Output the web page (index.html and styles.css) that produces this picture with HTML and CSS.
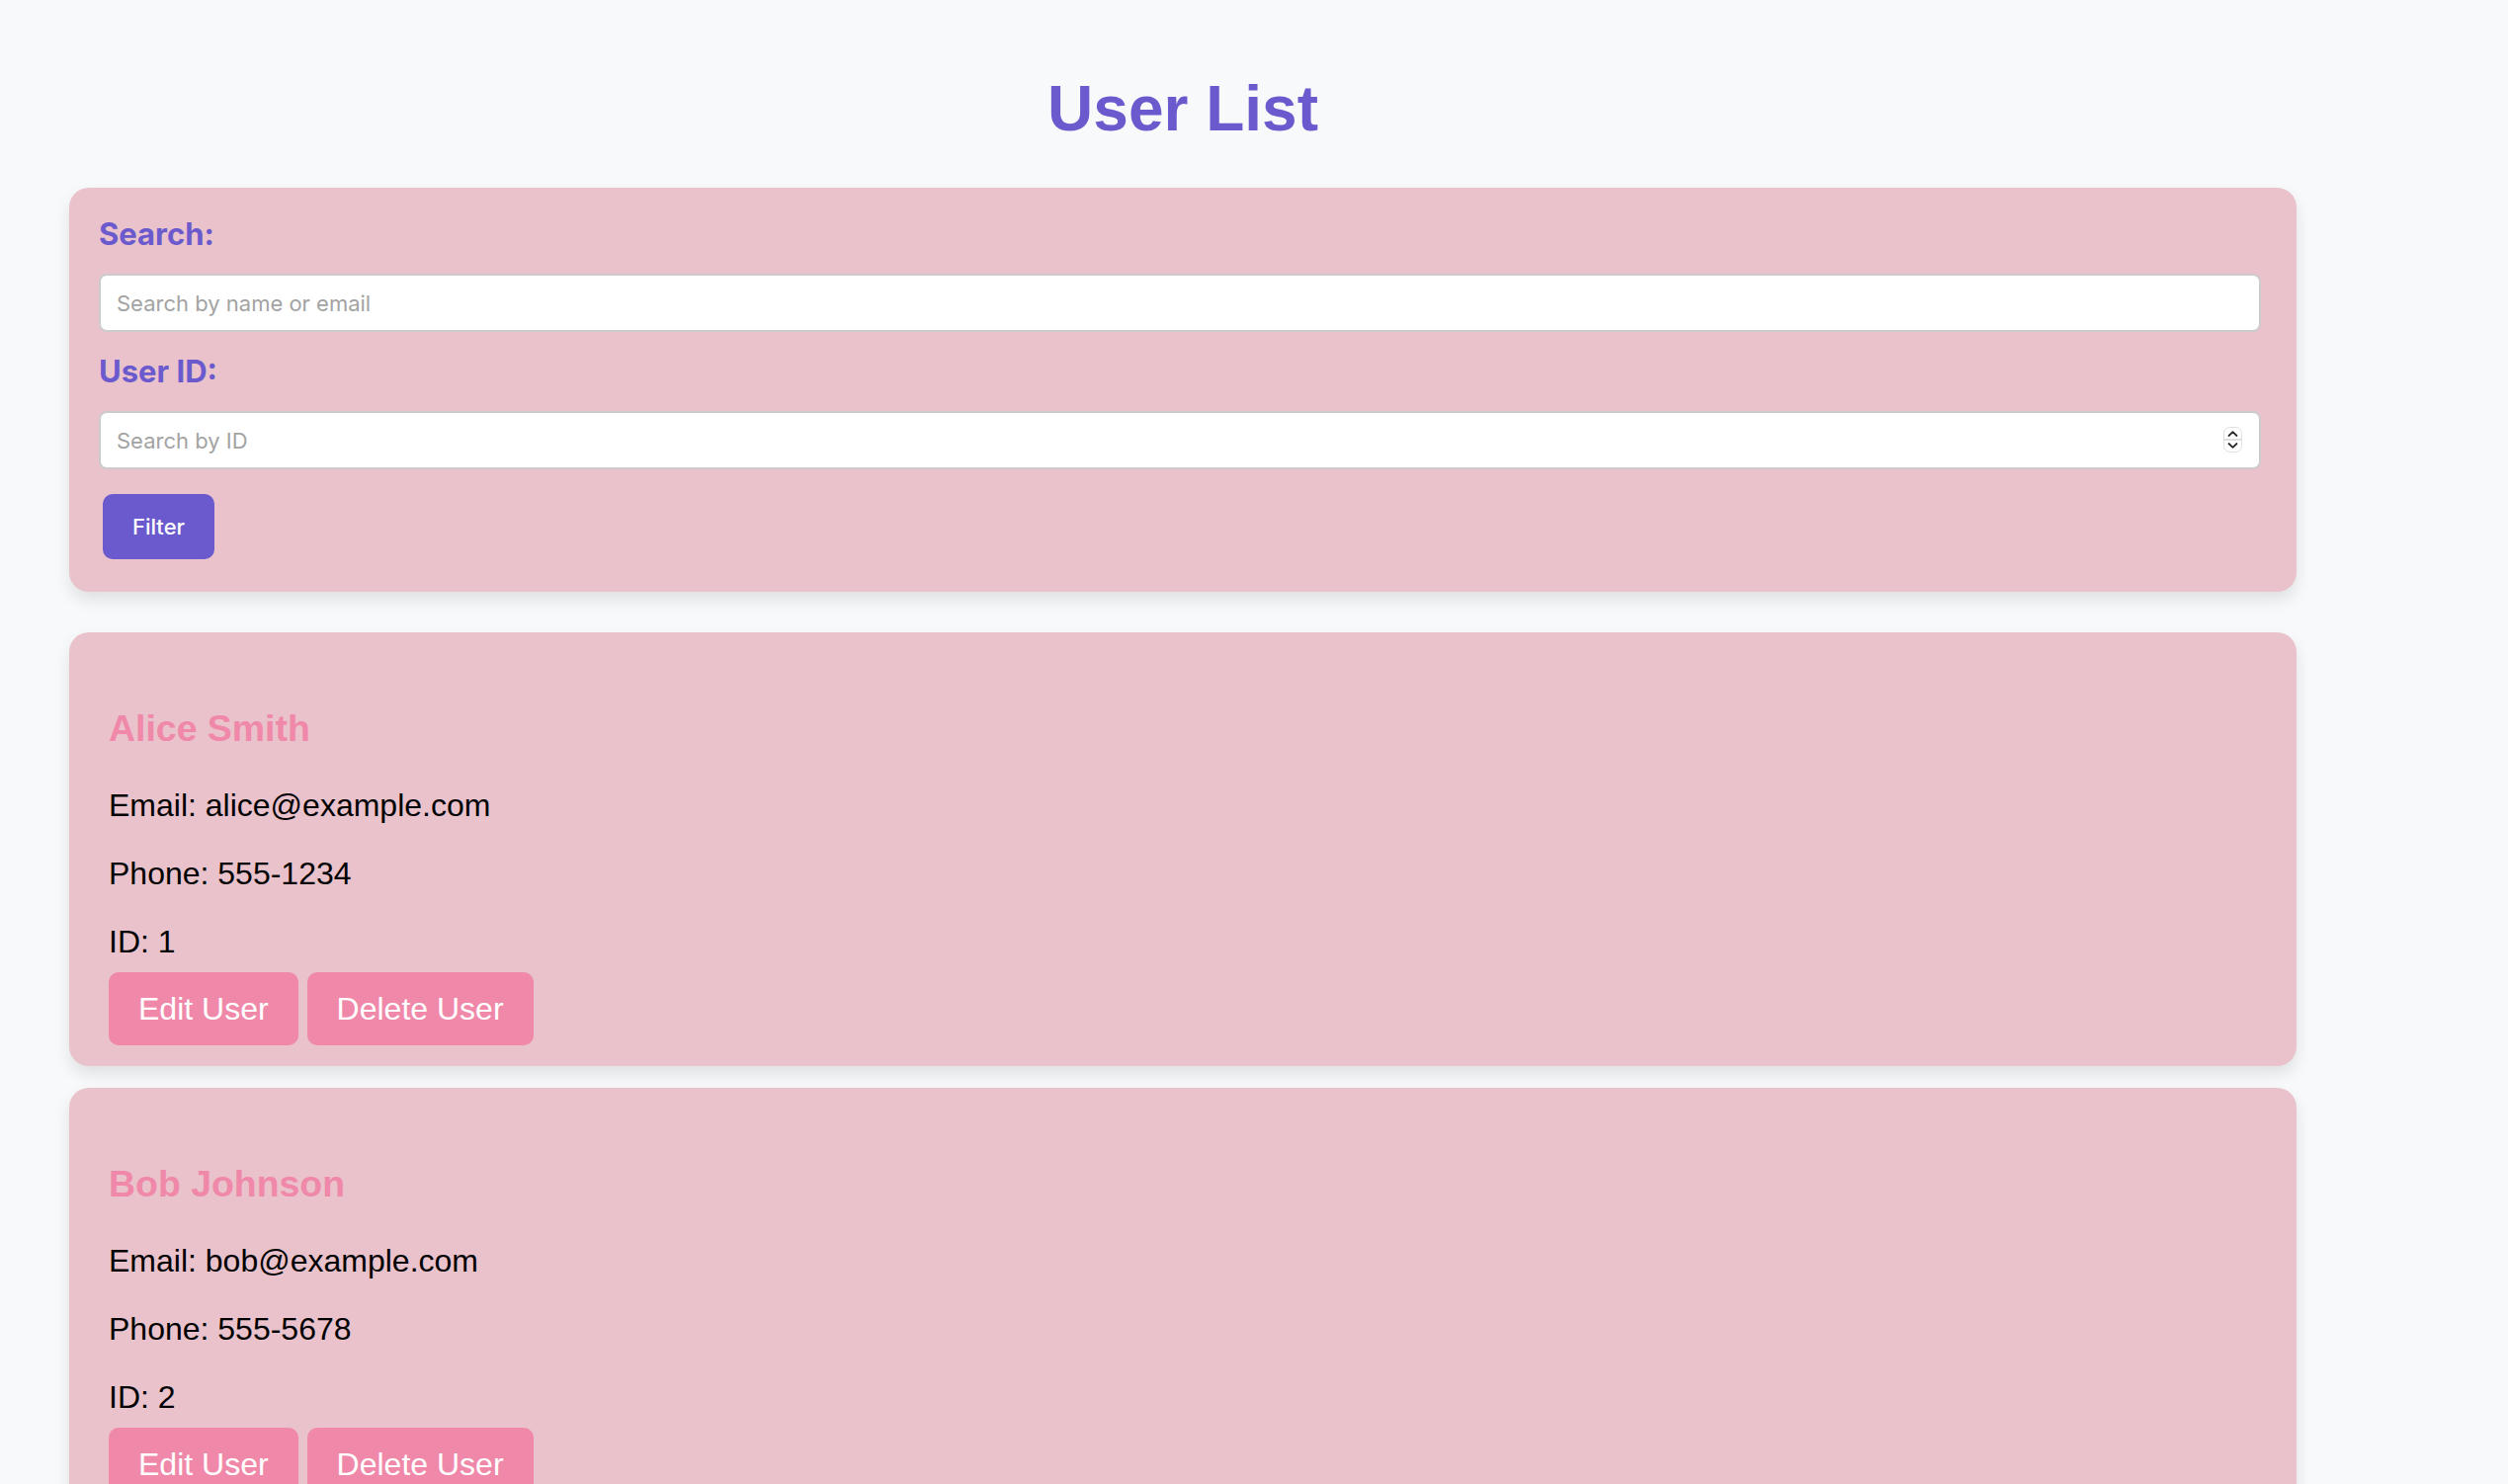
FILE: index.html
```html
<!DOCTYPE html>
<html lang="en">
<head>
<meta charset="utf-8">
<title>User List</title>
<link rel="stylesheet" href="styles.css">
</head>
<body>
<div class="container">
  <h1 class="page-title">User List</h1>

  <form class="filter-card">
    <label class="field-label" for="search">Search:</label>
    <input class="field-input field-gap" id="search" type="text" placeholder="Search by name or email">
    <label class="field-label" for="userid">User ID:</label>
    <div class="number-wrap">
      <input class="field-input" id="userid" type="number" placeholder="Search by ID">
      <svg class="spinner" width="19" height="26" viewBox="0 0 19 26" aria-hidden="true">
        <rect x="0.5" y="0.5" width="18" height="25" rx="6" ry="6" fill="#ffffff" stroke="#dedede"/>
        <line x1="1" y1="13" x2="18" y2="13" stroke="#d6d6d6" stroke-width="1.5"/>
        <path d="M5.5 9 L9.5 5.2 L13.5 9" fill="none" stroke="#2a2a2a" stroke-width="1.8" stroke-linecap="round" stroke-linejoin="round"/>
        <path d="M5.5 17 L9.5 20.8 L13.5 17" fill="none" stroke="#2a2a2a" stroke-width="1.8" stroke-linecap="round" stroke-linejoin="round"/>
      </svg>
    </div>
    <button class="filter-btn" type="button">Filter</button>
  </form>

  <div class="user-card">
    <h3 class="user-name">Alice Smith</h3>
    <p class="user-line">Email: alice@example.com</p>
    <p class="user-line">Phone: 555-1234</p>
    <p class="user-line user-line-last">ID: 1</p>
    <div class="user-actions">
      <button class="user-btn" type="button">Edit User</button>
      <button class="user-btn" type="button">Delete User</button>
    </div>
  </div>

  <div class="user-card">
    <h3 class="user-name">Bob Johnson</h3>
    <p class="user-line">Email: bob@example.com</p>
    <p class="user-line">Phone: 555-5678</p>
    <p class="user-line user-line-last">ID: 2</p>
    <div class="user-actions">
      <button class="user-btn" type="button">Edit User</button>
      <button class="user-btn" type="button">Delete User</button>
    </div>
  </div>
</div>
</body>
</html>
```

FILE: styles.css
```css
html, body {
  margin: 0;
  padding: 0;
}

body {
  background: #f8f9fa;
  padding-top: 30px;
  font-family: "Liberation Sans", Arial, Helvetica, sans-serif;
  color: #000;
}

.container {
  width: 2254px;
  margin-left: 70px;
}

.page-title {
  margin: 43px 0;
  text-align: center;
  font-family: "Liberation Sans", Arial, Helvetica, sans-serif;
  font-weight: 700;
  font-size: 64px;
  line-height: 74px;
  color: #6a5acd;
}

.filter-card {
  background: #eac2cb;
  border-radius: 20px;
  box-shadow: 0 8px 16px rgba(0, 0, 0, 0.1);
  padding: 27px 30px 33px 30px;
  margin: 0 0 41px 0;
  display: flex;
  flex-direction: column;
  align-items: flex-start;
}

.field-label {
  display: block;
  font-family: Inter, "Noto Sans", sans-serif;
  font-weight: 700;
  font-size: 31px;
  line-height: 39px;
  color: #6a5acd;
  margin-bottom: 21px;
}

.field-input {
  display: block;
  box-sizing: border-box;
  width: 2188px;
  height: 59px;
  margin: 0;
  padding: 0 16px;
  border: 2px solid #cccccc;
  border-radius: 8px;
  background: #ffffff;
  font-family: Inter, "Noto Sans", sans-serif;
  font-size: 22px;
  color: #222;
  outline: none;
}

.field-input::placeholder {
  color: #a3a3a3;
}

.field-input::-webkit-inner-spin-button,
.field-input::-webkit-outer-spin-button {
  -webkit-appearance: none;
  margin: 0;
}

.field-input[type="number"] {
  -moz-appearance: textfield;
  appearance: textfield;
}

.field-gap {
  margin-bottom: 20px;
}

.number-wrap {
  position: relative;
  width: 2188px;
}

.spinner {
  position: absolute;
  right: 19px;
  top: 16px;
  display: block;
}

.filter-btn {
  margin: 25px 0 0 4px;
  height: 66px;
  padding: 0 30px;
  border: none;
  border-radius: 10px;
  background: #6a5acd;
  color: #ffffff;
  font-family: Inter, "Noto Sans", sans-serif;
  font-weight: 500;
  font-size: 22px;
  cursor: pointer;
}

.user-card {
  background: #eac2cb;
  border-radius: 20px;
  box-shadow: 0 8px 16px rgba(0, 0, 0, 0.1);
  padding: 40px 40px 21px 40px;
  margin-bottom: 22px;
}

.user-name {
  margin: 36px 0 38px 0;
  font-family: "Liberation Sans", Arial, Helvetica, sans-serif;
  font-weight: 700;
  font-size: 37.44px;
  line-height: 43px;
  color: #ef88a9;
}

.user-line {
  margin: 0 0 32px 0;
  font-size: 32px;
  line-height: 37px;
}

.user-line-last {
  margin-bottom: 12px;
}

.user-actions {
  display: flex;
  gap: 9px;
}

.user-btn {
  height: 74px;
  padding: 0 30px;
  border: none;
  border-radius: 10px;
  background: #ef88a9;
  color: #ffffff;
  font-family: "Liberation Sans", Arial, Helvetica, sans-serif;
  font-size: 32px;
  line-height: 37px;
  cursor: pointer;
}
```
